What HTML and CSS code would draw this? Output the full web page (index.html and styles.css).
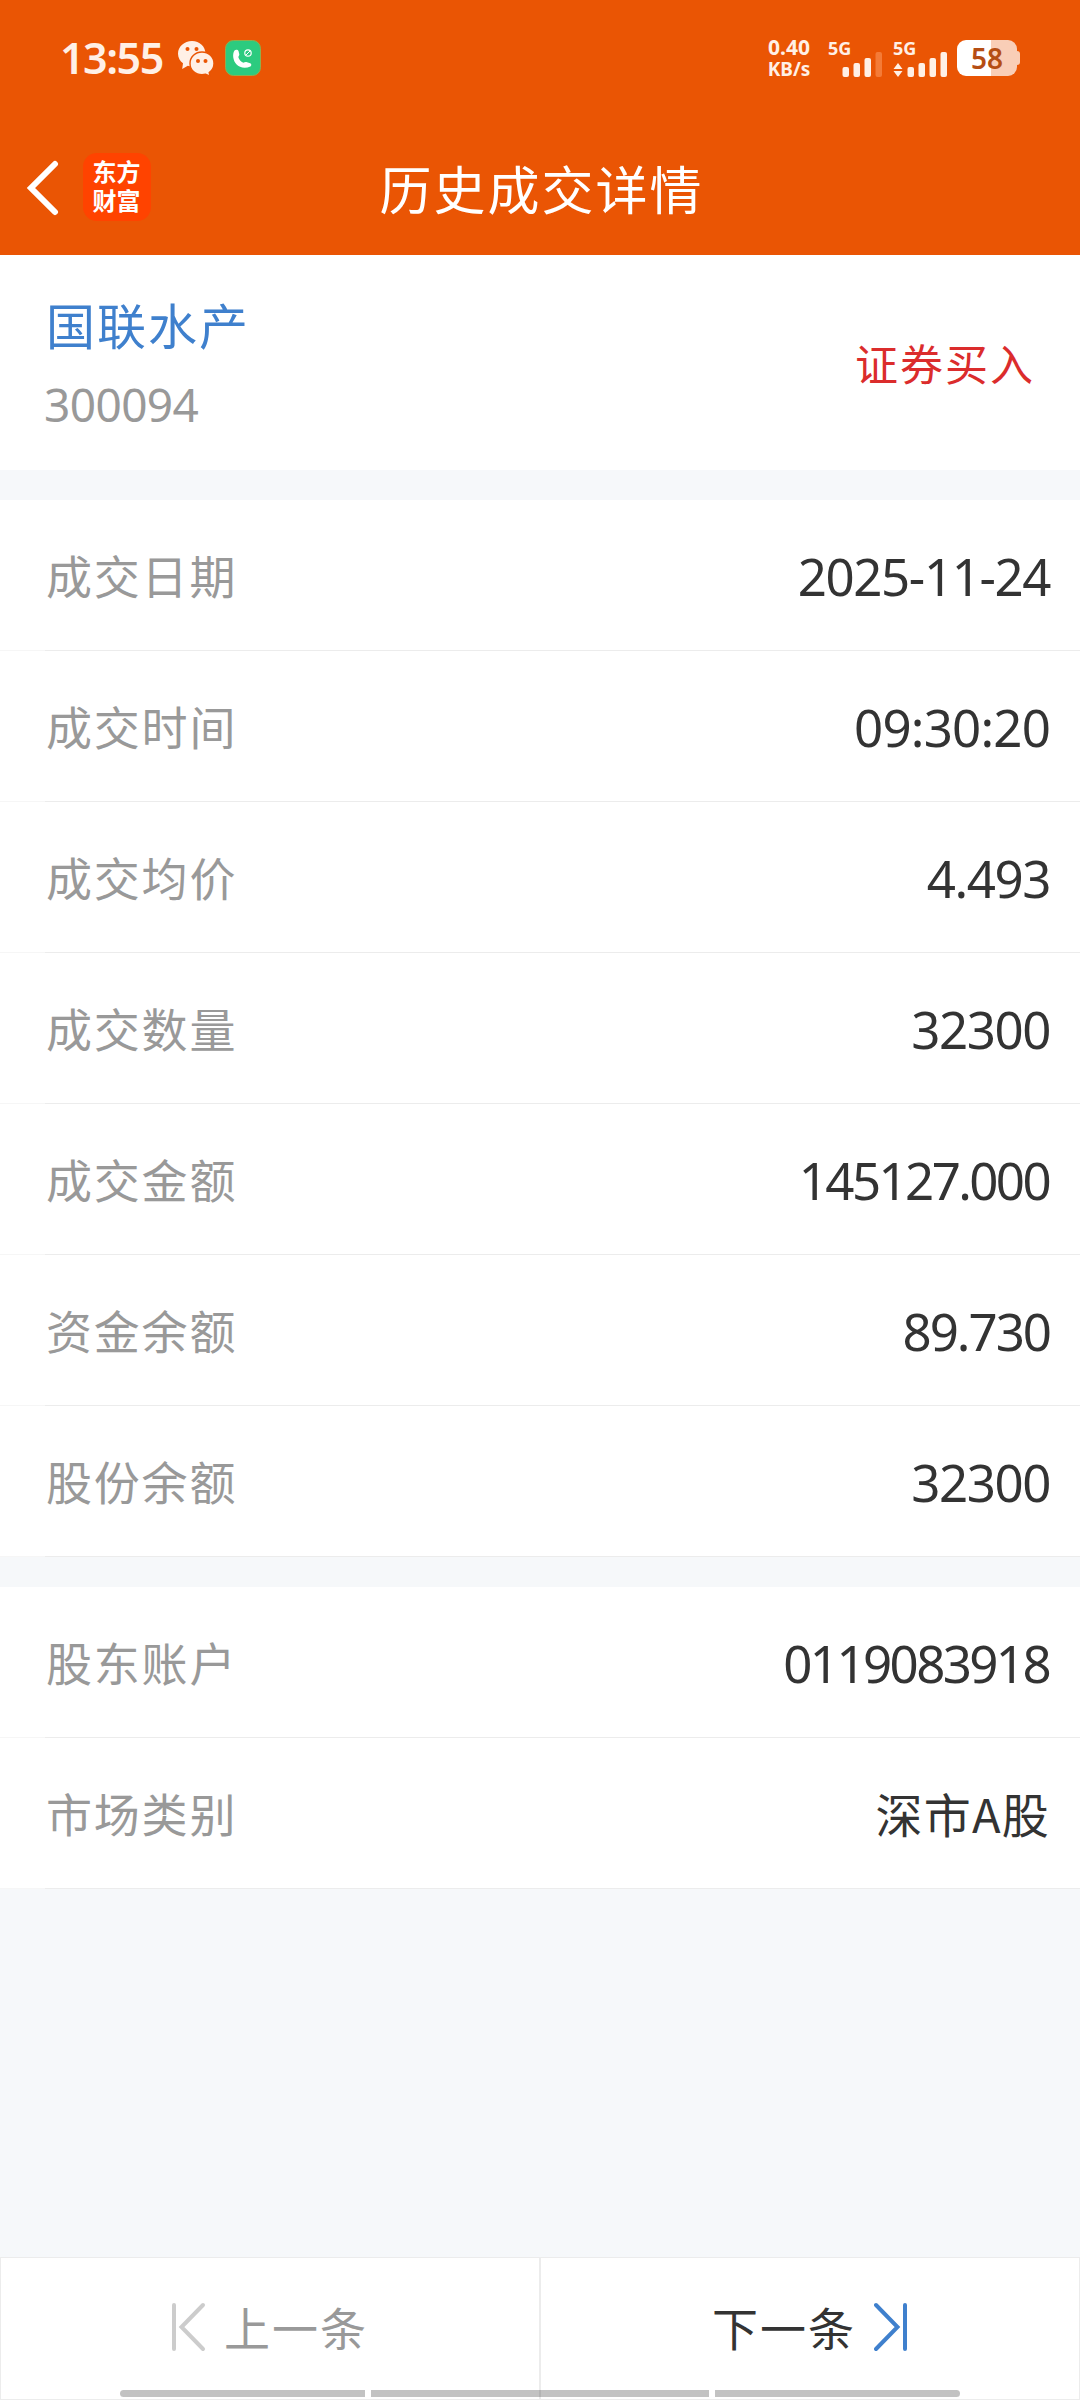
FILE: index.html
```html
<!DOCTYPE html>
<html lang="zh-CN">
  <head>
    <title>历史成交详情</title>
    <meta charset="UTF-8" />
    <meta name="viewport" content="width=device-width" />
    <link rel="stylesheet" href="styles.css">
  </head>
  <body>
    <!-- Status bar and title bar -->
    <header class="header">
      <div class="status-bar">
        <span class="time">13:55</span>
        <svg class="wechat" width="36" height="36" viewBox="0 0 36 36">
          <path fill="#fff0e6" d="M14 0C6.300 0 0 5.600 0 12.700c0 4 2 7.300 5 9.600L4.200 28l5.600-3.200c1.400.4 2.800.5 4.200.5 7.700 0 13.500-5.600 13.500-12.600S21.700 0 14 0z" />
          <path fill="#fff0e6" stroke="#ea5504" stroke-width="1.400" d="M24 11C17.300 11 12 16 12 22.400s5.300 11.300 12 11.300c1.300 0 2.500-.2 3.700-.5l4.300 2-.8-3.600c3-2.200 4.800-5.400 4.800-9.200C36 16 30.700 11 24 11z" />
          <circle cx="9.500" cy="8" r="2" fill="#ea5504" />
          <circle cx="18.500" cy="8" r="2" fill="#ea5504" />
          <circle cx="20" cy="20" r="2" fill="#ea5504" />
          <circle cx="27.500" cy="20" r="2" fill="#ea5504" />
        </svg>
        <svg class="call" width="36" height="36" viewBox="0 0 36 36">
          <rect x=".5" y=".5" width="35" height="35" rx="8" fill="#2ccb7f" stroke="#8fae4e" />
          <path fill="#fff" d="M9.500 10.500c1-1.200 3.600-.8 4 .4l.8 3.400c.2 1-.8 2-1 2.800.6 2.600 2.600 4.800 5 5.600 1 0 2-.9 3-.6l4 1.200c1.400.6 1.300 2.400.1 3.200-5 2.400-10.900 1.400-14-2.200C8.200 20.600 7 14.500 9.500 10.500z" />
          <circle cx="23" cy="13" r="3.200" fill="none" stroke="#fff" stroke-width="1.200" />
          <path stroke="#fff" stroke-width="1" d="M21 15l4-4" />
        </svg>
        <div class="speed"><span>0.40</span><span class="unit">KB/s</span></div>
        <div class="signal">
          <span>5G</span>
          <svg width="56" height="40" viewBox="0 0 56 40">
            <g fill="#fff0e6">
              <rect x="14.500" y="29" width="6.500" height="10" rx="2" />
              <rect x="25.500" y="25" width="6.500" height="14" rx="2" />
              <rect x="36.500" y="20" width="6.500" height="19" rx="2" />
            </g>
            <rect x="47.500" y="14" width="6.500" height="25" rx="2" fill="#f47b37" />
          </svg>
        </div>
        <div class="signal second">
          <span>5G</span>
          <svg width="56" height="40" viewBox="0 0 56 40">
            <g fill="#fff0e6">
              <path d="M5 25l4.500 6h-9zM5 39l-4.500-6h9z" />
              <rect x="14.500" y="29" width="6.500" height="10" rx="2" />
              <rect x="25.500" y="25" width="6.500" height="14" rx="2" />
              <rect x="36.500" y="20" width="6.500" height="19" rx="2" />
              <rect x="47.500" y="14" width="6.500" height="25" rx="2" />
            </g>
          </svg>
        </div>
        <div class="battery"><span class="level">58</span><i class="cap"></i></div>
      </div>
      <div class="title-bar">
        <svg class="back" width="34" height="56" viewBox="0 0 34 56">
          <path d="M29 4L5 28l24 24" fill="none" stroke="#fff" stroke-width="6" stroke-linecap="round" />
        </svg>
        <div class="logo"><span>东方</span><span>财富</span></div>
        <h1>历史成交详情</h1>
      </div>
    </header>

    <!-- Stock name and trade direction -->
    <section class="stock">
      <div>
        <div class="name">国联水产</div>
        <div class="code">300094</div>
      </div>
      <div class="direction">证券买入</div>
    </section>

    <!-- Trade details -->
    <section class="list">
      <div class="row"><span>成交日期</span><b>2025-11-24</b></div>
      <div class="row"><span>成交时间</span><b class="clock">09:30:20</b></div>
      <div class="row"><span>成交均价</span><b>4.493</b></div>
      <div class="row"><span>成交数量</span><b>32300</b></div>
      <div class="row"><span>成交金额</span><b class="long">145127.000</b></div>
      <div class="row"><span>资金余额</span><b class="balance">89.730</b></div>
      <div class="row"><span>股份余额</span><b>32300</b></div>
    </section>

    <!-- Account -->
    <section class="list">
      <div class="row"><span>股东账户</span><b class="long">0119083918</b></div>
      <div class="row"><span>市场类别</span><b class="market">深市A股</b></div>
    </section>

    <!-- Previous / next record -->
    <footer class="pager">
      <div class="page-btn prev">
        <svg width="34" height="50" viewBox="0 0 34 50">
          <path d="M2 3v44M31 3L9.500 25 31 47" fill="none" stroke="#ccc" stroke-width="4" stroke-linecap="round" />
        </svg>
        <span>上一条</span>
      </div>
      <div class="page-btn next">
        <span>下一条</span>
        <svg width="34" height="50" viewBox="0 0 34 50">
          <path d="M31 3v44M2 3l21.500 22L2 47" fill="none" stroke="#3f80cd" stroke-width="4" stroke-linecap="round" />
        </svg>
      </div>
      <div class="nav-hint"><i></i><i class="middle"></i><i></i></div>
    </footer>
  </body>
</html>
```

FILE: styles.css
```css
* {
  box-sizing: border-box;
}

body {
  margin: 0;
  height: 2400px;
  display: flex;
  flex-direction: column;
  background-color: #f6f8fa;
  color: #333;
  font-family: "Noto Sans", "Noto Sans CJK SC", sans-serif;
  white-space: nowrap;
}

.header {
  height: 255px;
  background-color: #ea5504;
  color: #fff;
}

/* Status bar */
.status-bar {
  display: flex;
  height: 116px;
  padding: 0 60px 0 60px;
  align-items: center;
  color: #fff0e6;
}

.time {
  width: 118px;
  margin-top: -2px;
  font-size: 43px;
  font-weight: 600;
  letter-spacing: -1.5px;
}

.wechat {
  margin-top: 2px;
}

.call {
  margin-left: 11px;
}

.speed {
  display: flex;
  flex-direction: column;
  width: 50px;
  margin-left: auto;
  align-items: center;
  font-size: 21px;
  font-weight: 700;
  line-height: 22px;
}

.unit {
  font-size: 19px;
}

.signal {
  position: relative;
  width: 56px;
  height: 40px;
  margin-left: 14px;
}

.signal.second {
  margin-left: 9px;
}

.signal span {
  position: absolute;
  left: 0;
  top: 0;
  font-size: 18px;
  font-weight: 700;
  line-height: 20px;
}

.battery {
  display: flex;
  align-items: center;
  margin-left: 8px;
}

.level {
  width: 60px;
  height: 36px;
  border-radius: 9px;
  background: linear-gradient(to right, #fff 34px, #f9ceb7 34px);
  color: #b54d14;
  font-size: 28px;
  font-weight: 600;
  line-height: 36px;
  text-align: center;
}

.cap {
  width: 3px;
  height: 14px;
  border-radius: 0 3px 3px 0;
  background-color: #f9ceb7;
}

/* Title bar */
.title-bar {
  display: grid;
  grid-template-columns: 57px 68px 1fr 150px;
  height: 139px;
  padding: 0 0 0 26px;
  align-items: center;
}

.back {
  margin-top: 4px;
}

.logo {
  display: flex;
  flex-direction: column;
  width: 68px;
  height: 68px;
  margin-top: 3px;
  padding: 3px 1px 0 0;
  border-radius: 14px;
  background-color: #ff4300;
  font-family: "Noto Sans CJK SC", sans-serif;
  font-size: 24px;
  font-weight: 700;
  line-height: 29px;
  text-align: center;
}

h1 {
  margin: 5px 0 0;
  padding-left: 2px;
  font-family: "Noto Sans CJK SC", sans-serif;
  font-size: 52px;
  font-weight: 400;
  letter-spacing: 2px;
  line-height: 76px;
  text-align: center;
}

/* Stock summary */
.stock {
  display: flex;
  height: 215px;
  padding: 0 45px;
  align-items: center;
  justify-content: space-between;
  background-color: #fff;
}

.name {
  margin-top: 5px;
  margin-left: 1px;
  color: #3f80cd;
  font-family: "Noto Sans CJK SC", sans-serif;
  font-size: 49px;
  letter-spacing: 2px;
  line-height: 79px;
}

.code {
  margin-left: -1px;
  color: #999;
  font-size: 46px;
  letter-spacing: -0.6px;
  line-height: 83px;
}

.direction {
  margin-top: -2px;
  color: #db2c2c;
  font-family: "Noto Sans CJK SC", sans-serif;
  font-size: 43px;
  letter-spacing: 2px;
}

/* Detail rows */
.list {
  margin-top: 30px;
  background-color: #fff;
}

.row {
  display: flex;
  height: 151px;
  padding: 0 30px 0 46px;
  align-items: center;
  justify-content: space-between;
  /* divider is fainter under the left padding */
  background: linear-gradient(to right, #f6f6f6 45px, #ececec 45px) bottom / 100% 1px no-repeat;
}

.row span {
  margin-top: -3px;
  color: #999;
  font-family: "Noto Sans CJK SC", sans-serif;
  font-size: 46px;
  letter-spacing: 1.8px;
}

.row b {
  margin-top: 1px;
  font-size: 51px;
  font-weight: 400;
  letter-spacing: -1.4px;
}

.row .clock {
  letter-spacing: -0.8px;
}

.row .long {
  margin-right: 1px;
  letter-spacing: -2.6px;
}

.row .balance {
  letter-spacing: -2px;
}

.row .market {
  margin-top: -3px;
  font-family: "Noto Sans CJK SC", sans-serif;
  font-size: 47px;
  letter-spacing: 1.2px;
}

/* Bottom buttons */
.pager {
  position: relative;
  display: flex;
  height: 143px;
  margin-top: auto;
}

.page-btn {
  display: flex;
  flex: 1;
  align-items: center;
  justify-content: center;
  padding-bottom: 3px;
  gap: 18px;
  border: 1px solid #ececec;
  background-color: #fff;
  font-family: "Noto Sans CJK SC", sans-serif;
  font-size: 46px;
  letter-spacing: 2px;
}

.page-btn span {
  margin-top: -2px;
}

.prev {
  color: #999;
}

/* Gesture bar over the buttons */
.nav-hint {
  position: absolute;
  left: 120px;
  bottom: 3px;
  display: flex;
  gap: 6px;
}

.nav-hint i {
  width: 245px;
  height: 7px;
  border-radius: 4px 0 0 4px;
  background-color: rgba(0, 0, 0, 0.24);
}

.nav-hint .middle {
  width: 338px;
  border-radius: 0;
}

.nav-hint i:last-child {
  border-radius: 0 4px 4px 0;
}
```
